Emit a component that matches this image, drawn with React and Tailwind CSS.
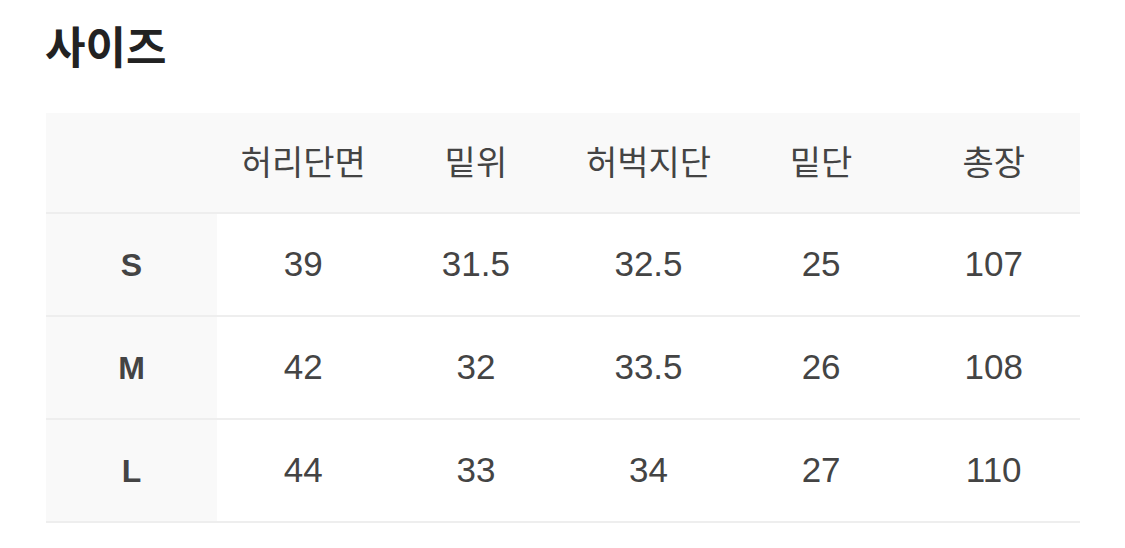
import React from 'react';

const headers = ['허리단면', '밑위', '허벅지단', '밑단', '총장'];
const rows = [
  { size: 'S', values: ['39', '31.5', '32.5', '25', '107'] },
  { size: 'M', values: ['42', '32', '33.5', '26', '108'] },
  { size: 'L', values: ['44', '33', '34', '27', '110'] },
];

const App = () => {
  return (
    <div
      className="w-[1125px] h-[548px] bg-white pl-[46px] pr-[45px] pt-[22px] text-[#444]"
      style={{ fontFamily: '"Liberation Sans", "Noto Sans CJK KR", sans-serif' }}
    >
      <h1 className="text-[44px] font-bold text-[#222] leading-[53px] -ml-[1px]">사이즈</h1>

      <div className="mt-[38px]">
        <div className="grid grid-cols-[171px_repeat(5,1fr)] h-[101px] bg-[#f9f9f9] border-b-2 border-[#eeeeee] items-center">
          <div />
          {headers.map((h) => (
            <div key={h} className="text-center text-[34px] pt-[2px]">
              {h}
            </div>
          ))}
        </div>

        {rows.map((row) => (
          <div
            key={row.size}
            className="grid grid-cols-[171px_repeat(5,1fr)] h-[103px] border-b-2 border-[#eeeeee]"
          >
            <div className="flex items-center justify-center bg-[#f9f9f9] text-[32px] font-bold">
              {row.size}
            </div>
            {row.values.map((v, i) => (
              <div key={i} className="flex items-center justify-center text-[35px]">
                {v}
              </div>
            ))}
          </div>
        ))}
      </div>
    </div>
  );
};

export default App;
